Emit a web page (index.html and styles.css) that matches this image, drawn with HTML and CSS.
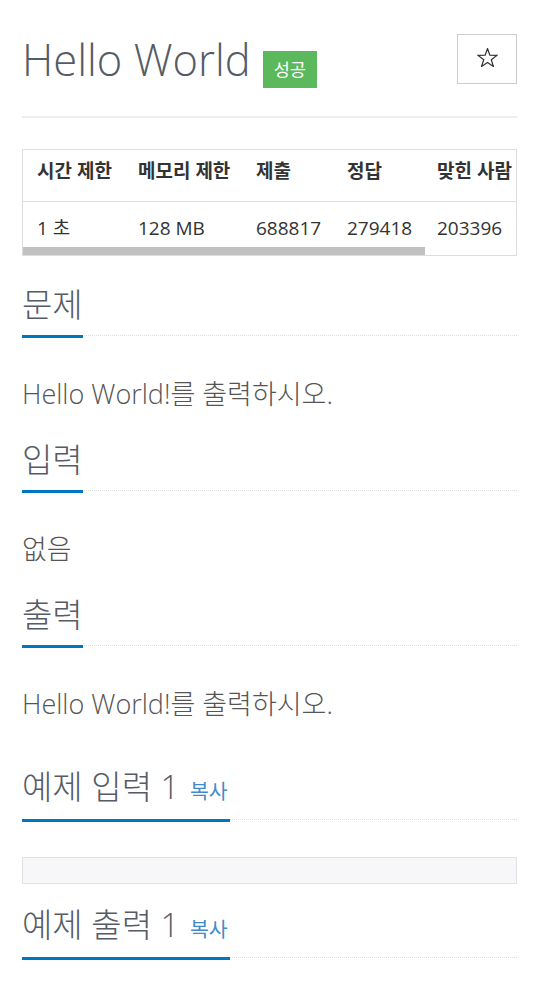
FILE: index.html
```html
<!DOCTYPE html>
<html lang="ko">
<head>
  <meta charset="UTF-8" />
  <meta name="viewport" content="width=device-width, initial-scale=1.0"/>
  <title>Hello World</title>
  <link rel="stylesheet" href="styles.css">
</head>
<body>

  <div class="container">

    <!-- Title -->
    <div class="page-header">
      <div class="title-row">
        <h1 class="problem-title">Hello World</h1>
        <span class="label-success">성공</span>
      </div>
      <button class="btn-star" title="즐겨찾기">
        <svg width="21" height="19" viewBox="0 0 22 20">
          <polygon points="11,0.6 13.47,7.6 20.9,7.76 14.99,12.3 17.17,19.4 11,15.2 4.83,19.4 7.01,12.3 1.1,7.76 8.53,7.6"
                   fill="none" stroke="#333" stroke-width="1.3" stroke-linejoin="miter"/>
        </svg>
      </button>
    </div>

    <!-- Info table -->
    <div class="table-wrap">
      <div class="table-scroll">
        <table class="problem-info">
          <thead>
            <tr>
              <th class="col-time">시간 제한</th>
              <th class="col-memory">메모리 제한</th>
              <th class="col-submit">제출</th>
              <th class="col-accepted">정답</th>
              <th class="col-users">맞힌 사람</th>
              <th class="col-ratio">정답 비율</th>
            </tr>
          </thead>
          <tbody>
            <tr>
              <td>1 초</td>
              <td>128 MB</td>
              <td>688817</td>
              <td>279418</td>
              <td>203396</td>
              <td>41.565%</td>
            </tr>
          </tbody>
        </table>
      </div>
      <div class="scroll-thumb"></div>
    </div>

    <!-- Problem -->
    <section class="problem-section">
      <div class="headline"><h2>문제</h2></div>
      <p class="problem-text">Hello World!를 출력하시오.</p>
    </section>

    <section class="problem-section">
      <div class="headline"><h2>입력</h2></div>
      <p class="problem-text">없음</p>
    </section>

    <section class="problem-section">
      <div class="headline"><h2>출력</h2></div>
      <p class="problem-text">Hello World!를 출력하시오.</p>
    </section>

    <!-- Samples -->
    <section class="sample-section first-sample">
      <div class="headline"><h2>예제 입력 1 <button class="copy-button">복사</button></h2></div>
      <pre class="sampledata"></pre>
    </section>

    <section class="sample-section">
      <div class="headline"><h2>예제 출력 1 <button class="copy-button">복사</button></h2></div>
      <pre class="sampledata">Hello World!</pre>
    </section>

  </div>

</body>
</html>
```

FILE: styles.css
```css
body {
  margin: 0;
  font-family: "Open Sans", "Noto Sans CJK KR", sans-serif;
  color: #555;
  background: #fff;
}

.container {
  padding: 0 23px 40px 22px;
}

/* title */

.page-header {
  display: flex;
  justify-content: space-between;
  align-items: flex-start;
  padding-top: 34px;
  padding-bottom: 28px;
  border-bottom: 2px solid #eee;
}

.title-row {
  display: flex;
  align-items: flex-start;
  gap: 12px;
}

.problem-title {
  margin: 0;
  font-size: 43.5px;
  line-height: 52px;
  font-weight: 300;
  color: #565c66;
}

.label-success {
  margin-top: 17px;
  height: 37px;
  line-height: 37px;
  padding: 0 11px;
  background: #5cb85c;
  color: #fff;
  font-size: 17.5px;
}

.btn-star {
  width: 60px;
  height: 50px;
  padding: 0 0 3px 0;
  border: 1px solid #ccc;
  background: #fff;
  display: flex;
  align-items: center;
  justify-content: center;
}

/* info table */

.table-wrap {
  position: relative;
  margin-top: 31px;
  border: 1px solid #ddd;
}

.table-scroll {
  overflow: hidden;
}

.problem-info {
  width: 606px;
  table-layout: fixed;
  border-collapse: collapse;
  font-size: 19px;
  line-height: 26px;
  color: #333;
  text-align: left;
}

.problem-info th {
  font-weight: bold;
  padding: 8px 0 17px 14px;
  border-bottom: 1px solid #ddd;
  white-space: nowrap;
}

.problem-info td {
  padding: 13px 0 14px 14px;
  white-space: nowrap;
}

.col-time { width: 87px; }
.col-memory { width: 104px; }
.col-submit { width: 77px; }
.col-accepted { width: 76px; }
.col-users { width: 76px; }

.scroll-thumb {
  position: absolute;
  left: 0;
  bottom: 0;
  width: 402px;
  height: 8px;
  background: #c1c1c1;
}

/* sections */

.problem-section,
.sample-section {
  margin-top: 32px;
}

.problem-section + .problem-section {
  margin-top: 28px;
}

.sample-section + .sample-section {
  margin-top: 24px;
}

.first-sample {
  margin-top: 45px;
}

.headline {
  display: flex;
  border-bottom: 1px dotted #ddd;
  margin-bottom: 37px;
}

.sample-section .headline {
  margin-bottom: 37px;
}

.headline h2 {
  margin: 0 0 -3px 0;
  padding-bottom: 14px;
  border-bottom: 3px solid #0076c0;
  font-size: 33px;
  line-height: 33px;
  font-weight: 300;
  color: #565c66;
  white-space: nowrap;
}

.copy-button {
  margin: 0 2px 0 2px;
  padding: 0;
  border: 0;
  background: none;
  font-family: inherit;
  font-size: 20.5px;
  color: #428bca;
}

.problem-text {
  margin: 0;
  font-size: 27px;
  line-height: 42px;
  font-weight: 300;
  color: #555;
}

.sampledata {
  margin: 0;
  min-height: 25px;
  padding: 0 10px;
  border: 1px solid #e1e1e8;
  background: #f7f7f9;
  font-family: "Liberation Mono", monospace;
  font-size: 16px;
  line-height: 25px;
  color: #333;
}
```
